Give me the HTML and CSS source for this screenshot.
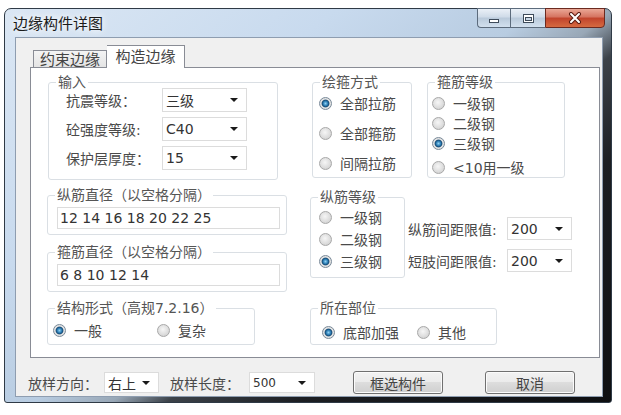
FILE: index.html
```html
<!DOCTYPE html>
<html lang="zh-CN">
  <head>
    <meta charset="UTF-8" />
    <meta name="viewport" content="width=device-width, initial-scale=1.0" />
    <title>边缘构件详图</title>
    <link rel="stylesheet" href="styles.css">
  </head>
  <body>
    <div class="window">
      <div class="titlebar">
        <span class="window-title">边缘构件详图</span>
        <div class="caption-buttons">
          <span class="caption-btn btn-min">
            <svg width="12" height="12" viewBox="0 0 12 12">
              <rect x="1.5" y="7.5" width="9" height="3" fill="#fff" stroke="#3e4b5a" />
            </svg>
          </span>
          <span class="caption-btn btn-max">
            <svg width="13" height="11" viewBox="0 0 13 11">
              <rect x="1.5" y="1.5" width="10" height="8" fill="#fff" stroke="#3e4b5a" />
              <rect x="3.5" y="4.5" width="6" height="3" fill="#c9d7e6" stroke="#3e4b5a" />
            </svg>
          </span>
          <span class="caption-btn btn-close">
            <svg width="14" height="12" viewBox="0 0 14 12">
              <path d="M3 2 L11 10 M11 2 L3 10" stroke="#5a1c12" stroke-width="4" stroke-linecap="round" />
              <path d="M3 2 L11 10 M11 2 L3 10" stroke="#fff" stroke-width="2" stroke-linecap="round" />
            </svg>
          </span>
        </div>
      </div>

      <div class="client">
        <div class="tabs">
          <span class="tab">约束边缘</span>
          <span class="tab tab-active">构造边缘</span>
        </div>

        <div class="panel">
          <div class="col-left">
            <fieldset class="group group-input">
              <legend>输入</legend>
              <div class="group-body">
                <div class="field-row">
                  <span class="field-label">抗震等级：</span>
                  <div class="combo combo-input">三级</div>
                </div>
                <div class="field-row">
                  <span class="field-label">砼强度等级:</span>
                  <div class="combo combo-input">C40</div>
                </div>
                <div class="field-row">
                  <span class="field-label">保护层厚度：</span>
                  <div class="combo combo-input">15</div>
                </div>
              </div>
            </fieldset>

            <fieldset class="group group-dia group-zj">
              <legend>纵筋直径（以空格分隔）</legend>
              <div class="group-body">
                <div class="textbox">12 14 16 18 20 22 25</div>
              </div>
            </fieldset>

            <fieldset class="group group-dia group-gj">
              <legend>箍筋直径（以空格分隔）</legend>
              <div class="group-body">
                <div class="textbox">6 8 10 12 14</div>
              </div>
            </fieldset>

            <fieldset class="group group-struct">
              <legend>结构形式（高规7.2.16）</legend>
              <div class="group-body radio-line">
                <span class="radio radio-checked radio-wide"><span class="radio-dot"></span>一般</span>
                <span class="radio"><span class="radio-dot"></span>复杂</span>
              </div>
            </fieldset>
          </div>

          <div class="col-right">
            <div class="row-top">
              <fieldset class="group group-draw">
                <legend>绘箍方式</legend>
                <div class="group-body radio-list">
                  <span class="radio radio-checked"><span class="radio-dot"></span>全部拉筋</span>
                  <span class="radio"><span class="radio-dot"></span>全部箍筋</span>
                  <span class="radio"><span class="radio-dot"></span>间隔拉筋</span>
                </div>
              </fieldset>

              <fieldset class="group group-hoop">
                <legend>箍筋等级</legend>
                <div class="group-body radio-list">
                  <span class="radio"><span class="radio-dot"></span>一级钢</span>
                  <span class="radio"><span class="radio-dot"></span>二级钢</span>
                  <span class="radio radio-checked"><span class="radio-dot"></span>三级钢</span>
                  <span class="radio radio-last"><span class="radio-dot"></span>&lt;10用一级</span>
                </div>
              </fieldset>
            </div>

            <div class="row-mid">
              <fieldset class="group group-long">
                <legend>纵筋等级</legend>
                <div class="group-body radio-list">
                  <span class="radio"><span class="radio-dot"></span>一级钢</span>
                  <span class="radio"><span class="radio-dot"></span>二级钢</span>
                  <span class="radio radio-checked"><span class="radio-dot"></span>三级钢</span>
                </div>
              </fieldset>

              <div class="limits">
                <div class="limit-row">
                  <span class="limit-label">纵筋间距限值:</span>
                  <div class="combo combo-limit">200</div>
                </div>
                <div class="limit-row">
                  <span class="limit-label">短肢间距限值:</span>
                  <div class="combo combo-limit">200</div>
                </div>
              </div>
            </div>

            <fieldset class="group group-place">
              <legend>所在部位</legend>
              <div class="group-body radio-line">
                <span class="radio radio-checked radio-place"><span class="radio-dot"></span>底部加强</span>
                <span class="radio"><span class="radio-dot"></span>其他</span>
              </div>
            </fieldset>
          </div>
        </div>

        <div class="bottom-bar">
          <span class="bar-label bar-label-dir">放样方向：</span>
          <div class="combo combo-dir">右上</div>
          <span class="bar-label bar-label-len">放样长度：</span>
          <div class="combo combo-len">500</div>
          <button class="btn btn-select">框选构件</button>
          <button class="btn btn-cancel">取消</button>
        </div>
      </div>
    </div>
  </body>
</html>
```

FILE: styles.css
```css
body {
  margin: 0;
  padding: 8px 0 0 4px;
  background: #fff;
  font-family: "DejaVu Sans", "Noto Sans CJK SC", sans-serif;
  font-size: 14px;
  color: #4a4a4a;
}

/* window frame */
.window {
  width: 608px;
  height: 395px;
  box-sizing: border-box;
  border: 1px solid #2f3a46;
  border-radius: 7px 7px 3px 3px;
  background: linear-gradient(
    142deg,
    #dbe7f4 0%,
    #c8daee 30%,
    #b8cce1 48%,
    #98a7b6 55%,
    #3c4249 60%,
    #1c1e22 72%,
    #0e0f11 100%
  );
  display: flex;
  flex-direction: column;
}

.titlebar {
  height: 28px;
  display: flex;
  justify-content: space-between;
  align-items: flex-start;
  padding: 0 6px 0 8px;
}

.window-title {
  font-family: "Noto Sans CJK SC", sans-serif;
  font-size: 15px;
  line-height: 28px;
  color: #1a1a1a;
  text-shadow: 0 0 6px rgba(255, 255, 255, 0.95), 0 0 10px rgba(255, 255, 255, 0.8);
}

.caption-buttons {
  display: flex;
  margin-top: -1px;
}

.caption-btn {
  height: 20px;
  box-sizing: border-box;
  border: 1px solid #5c6b7c;
  display: flex;
  align-items: center;
  justify-content: center;
  background: linear-gradient(#eaf0f7 0%, #cfdbe8 45%, #b9c9da 50%, #d2e0ee 100%);
}

.btn-min {
  width: 33px;
  border-right: none;
  border-radius: 0 0 0 4px;
}

.btn-max {
  width: 35px;
  border-right: none;
}

.btn-close {
  width: 60px;
  border-color: #6b2a20;
  border-radius: 0 0 4px 0;
  background: linear-gradient(#eaa796 0%, #d5735f 45%, #c1432c 50%, #d66a40 100%);
}

/* client area */
.client {
  margin: 0 8px 0 10px;
  height: 360px;
  box-sizing: border-box;
  border: 1px solid #8e9db0;
  background: #f0f0f0;
  padding: 7px 2px 2px 14px;
}

.tabs {
  display: flex;
  align-items: flex-end;
  height: 22px;
  padding-left: 3px;
}

.tab {
  box-sizing: border-box;
  width: 74px;
  height: 17px;
  border: 1px solid #898c95;
  border-bottom: none;
  background: linear-gradient(#f4f4f4, #e4e4e4);
  font-family: "Noto Sans CJK SC", sans-serif;
  font-size: 15px;
  line-height: 16px;
  text-align: center;
  color: #444;
}

.tab-active {
  position: relative;
  width: 78px;
  height: 23px;
  margin-bottom: -1px;
  border-left: none;
  background: #fff;
  line-height: 20px;
}

.panel {
  height: 291px;
  box-sizing: border-box;
  border: 1px solid #898c95;
  background: #fff;
  display: flex;
  gap: 23px;
  padding: 8px 0 0 16px;
}

.col-left {
  width: 240px;
  display: flex;
  flex-direction: column;
  align-items: flex-start;
}

.col-right {
  width: 262px;
  display: flex;
  flex-direction: column;
  align-items: flex-start;
}

/* group boxes */
.group {
  margin: 0;
  padding: 0;
  min-width: 0;
  box-sizing: border-box;
  border: 1px solid #dadfe4;
  border-radius: 3px;
}

.group legend {
  margin-left: 7px;
  padding: 0 2px;
  font-size: 14px;
  line-height: 12px;
  color: #555;
}

.group-input {
  width: 230px;
  height: 104px;
  margin-left: 1px;
}

.group-input .group-body {
  padding-left: 17px;
}

.field-row {
  display: flex;
  align-items: center;
  height: 24px;
  margin-bottom: 5px;
}

.field-label {
  width: 96px;
}

.group-dia {
  width: 240px;
  height: 46px;
}

.group-dia .group-body {
  padding: 6px 0 0 9px;
}

.group-zj {
  margin-top: 9px;
}

.group-gj {
  margin-top: 11px;
}

.textbox {
  width: 223px;
  height: 22px;
  box-sizing: border-box;
  border: 1px solid #dcdcdc;
  background: #fff;
  padding-left: 2px;
  line-height: 20px;
  color: #333;
}

.group-struct {
  width: 208px;
  height: 43px;
  margin-top: 10px;
}

.group-struct .group-body {
  padding: 6px 0 0 5px;
}

.radio-line {
  display: flex;
}

.radio-line .radio {
  height: 20px;
}

.radio-wide {
  width: 104px;
}

/* right column */
.row-top {
  display: flex;
  gap: 15px;
  margin-left: 2px;
}

.group-draw {
  width: 100px;
  height: 102px;
}

.group-draw .group-body {
  padding: 6px 0 0 6px;
  gap: 12px;
}

.group-hoop {
  width: 138px;
  height: 102px;
}

.group-hoop .group-body {
  padding: 6px 0 0 4px;
  gap: 2px;
}

.radio-last {
  margin-top: 4px;
}

.row-mid {
  display: flex;
  margin-top: 13px;
}

.group-long {
  width: 95px;
  height: 87px;
}

.group-long .group-body {
  padding: 5px 0 0 8px;
  gap: 4px;
}

.limits {
  margin-left: 3px;
  padding-top: 26px;
  display: flex;
  flex-direction: column;
  gap: 9px;
}

.limit-row {
  display: flex;
  align-items: center;
  height: 23px;
}

.limit-label {
  width: 99px;
  white-space: nowrap;
}

.group-place {
  width: 187px;
  height: 43px;
  margin-top: 24px;
}

.group-place .group-body {
  padding: 8px 0 0 11px;
}

.radio-place {
  width: 95px;
}

.radio-list {
  display: flex;
  flex-direction: column;
}

.radio {
  display: flex;
  align-items: center;
  gap: 8px;
  height: 18px;
  white-space: nowrap;
}

.radio-dot {
  flex: none;
  width: 13px;
  height: 13px;
  box-sizing: border-box;
  border-radius: 50%;
  border: 1px solid #a8a8a8;
  background: radial-gradient(circle at 45% 40%, #f6f6f6 0%, #dedede 55%, #c9c9c9 100%);
}

.radio-checked .radio-dot {
  border-color: #7a8a99;
  background: radial-gradient(
    circle,
    #8fd0f2 0%,
    #2f80b6 28%,
    #154a75 44%,
    #e6e6e6 56%,
    #cfcfcf 100%
  );
}

/* combos */
.combo {
  display: flex;
  align-items: center;
  justify-content: space-between;
  box-sizing: border-box;
  border: 1px solid #dcdcdc;
  background: #fff;
  padding: 0 8px 0 3px;
  color: #333;
}

.combo::after {
  content: "";
  border-top: 4px solid #1a1a1a;
  border-left: 4px solid transparent;
  border-right: 4px solid transparent;
}

.combo-input {
  width: 85px;
  height: 24px;
}

.combo-limit {
  width: 65px;
  height: 23px;
}

/* bottom bar */
.bottom-bar {
  display: flex;
  align-items: center;
  height: 23px;
  margin: 13px 0 0 -2px;
}

.bar-label-dir {
  width: 76px;
}

.bar-label-len {
  width: 79px;
  margin-left: 11px;
}

.combo-dir {
  width: 55px;
  height: 21px;
}

.combo-len {
  width: 66px;
  height: 21px;
  font-size: 12px;
}

.btn {
  width: 90px;
  height: 23px;
  box-sizing: border-box;
  padding: 0;
  border: 1px solid #707070;
  border-radius: 3px;
  background: linear-gradient(#f2f2f2 0%, #ebebeb 49%, #dddddd 50%, #cfcfcf 100%);
  box-shadow: inset 0 0 0 1px #fbfbfb;
  font-family: "Noto Sans CJK SC", sans-serif;
  font-size: 14px;
  color: #444;
}

.btn-select {
  margin-left: 38px;
}

.btn-cancel {
  margin-left: 42px;
}
```
